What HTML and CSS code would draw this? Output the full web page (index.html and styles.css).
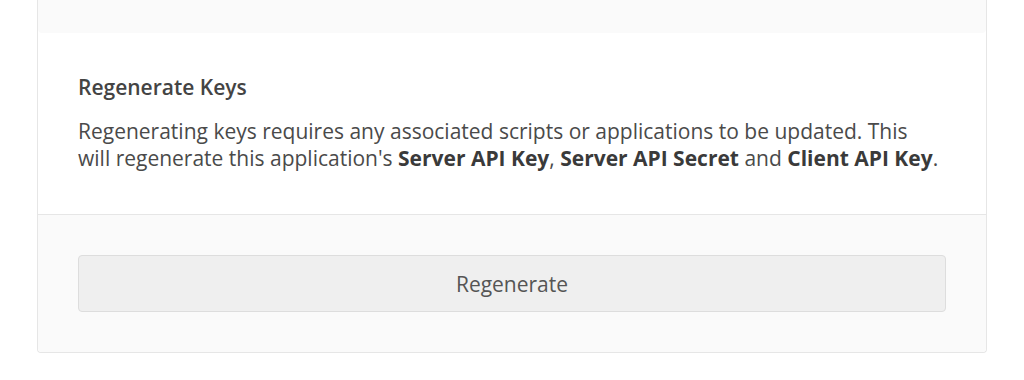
FILE: index.html
```html
<!DOCTYPE html>
<html lang="en">
<head>
  <meta charset="UTF-8" />
  <title>Regenerate Keys</title>
  <link rel="stylesheet" href="styles.css">
</head>
<body>
  <div class="panel">
    <div class="panel-prev"></div>

    <div class="panel-body">
      <h4 class="panel-title">Regenerate Keys</h4>
      <p class="panel-text">
        Regenerating keys requires any associated scripts or applications to be updated. This<br>
        will regenerate this application's <strong>Server API Key</strong>, <strong>Server API Secret</strong> and <strong>Client API Key</strong>.
      </p>
    </div>

    <div class="panel-footer">
      <button type="button" class="btn">Regenerate</button>
    </div>
  </div>
</body>
</html>
```

FILE: styles.css
```css
body {
  margin: 0;
  background-color: #fff;
  font-family: 'Open Sans', sans-serif;
  color: #4a4a4a;
}

.panel {
  margin: 0 37px;
  border: 1px solid #e6e6e6;
  border-top: none;
  border-radius: 0 0 4px 4px;
  background-color: #fff;
}

.panel-prev {
  height: 33px;
  background-color: #fafafa;
  border-radius: 0 0 4px 4px;
}

.panel-body {
  padding: 40px 40px 42px;
}

.panel-title {
  margin: 0 0 15.6px;
  font-size: 21px;
  font-weight: 600;
  line-height: 29.4px;
  color: #444;
}

.panel-text {
  margin: 0;
  font-size: 21px;
  line-height: 27px;
  color: #4a4a4a;
}

.panel-text strong {
  font-weight: 700;
  color: #3a3a3a;
}

.panel-footer {
  padding: 40px;
  background-color: #fafafa;
  border-top: 1px solid #e6e6e6;
  border-radius: 0 0 4px 4px;
}

.btn {
  display: block;
  width: 100%;
  height: 57px;
  padding: 0;
  font-family: 'Open Sans', sans-serif;
  font-size: 21px;
  color: #555;
  background-color: #efefef;
  border: 1px solid #dddddd;
  border-radius: 4px;
  cursor: pointer;
}
```
